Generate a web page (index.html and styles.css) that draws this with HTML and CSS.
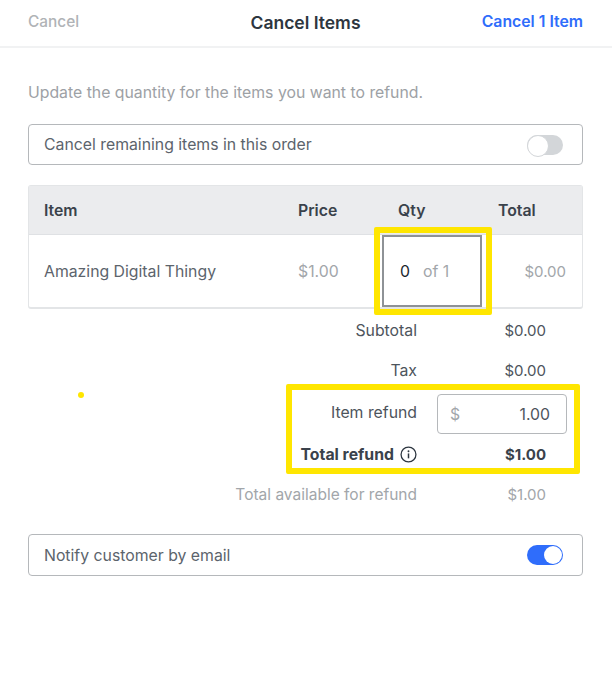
FILE: index.html
```html
<!DOCTYPE html>
<html lang="en">
<head>
    <meta charset="UTF-8">
    <meta name="viewport" content="width=device-width, initial-scale=1.0">
    <title>Cancel Items</title>
    <link rel="stylesheet" href="styles.css">
</head>
<body>

    <header class="topbar">
        <span class="topbar-cancel">Cancel</span>
        <h1 class="topbar-title">Cancel Items</h1>
        <span class="topbar-action">Cancel 1 Item</span>
    </header>

    <main class="content">
        <p class="intro">Update the quantity for the items you want to refund.</p>

        <div class="switch-row switch-cancel">
            <span>Cancel remaining items in this order</span>
            <span class="toggle"></span>
        </div>

        <!-- Items table -->
        <div class="items">
            <div class="items-head">
                <span>Item</span>
                <span>Price</span>
                <span class="cell-qty">Qty</span>
                <span class="cell-total">Total</span>
            </div>
            <div class="items-row">
                <span>Amazing Digital Thingy</span>
                <span class="muted">$1.00</span>
                <div class="qty-box">
                    <span class="qty-value">0</span>
                    <span class="muted">of 1</span>
                    <span class="highlight highlight-qty"></span>
                </div>
                <span class="muted cell-amount">$0.00</span>
            </div>
        </div>

        <!-- Totals -->
        <div class="summary">
            <div class="summary-row">
                <span class="summary-label">Subtotal</span>
                <span class="summary-value">$0.00</span>
            </div>
            <div class="summary-row">
                <span class="summary-label">Tax</span>
                <span class="summary-value">$0.00</span>
            </div>
            <div class="refund-group">
                <div class="summary-row">
                    <span class="summary-label summary-label-raised">Item refund</span>
                    <div class="money-input">
                        <span class="muted">$</span>
                        <span>1.00</span>
                    </div>
                </div>
                <div class="summary-row summary-strong">
                    <span class="summary-label">
                        Total refund
                        <svg class="info-icon" width="17" height="17" viewBox="0 0 16 16">
                            <circle cx="8" cy="8" r="7" fill="none" stroke="#2d3640" stroke-width="1.2"/>
                            <rect x="7.3" y="7" width="1.4" height="4.6" fill="#2d3640"/>
                            <circle cx="8" cy="4.9" r="0.9" fill="#2d3640"/>
                        </svg>
                    </span>
                    <span class="summary-value">$1.00</span>
                </div>
                <span class="highlight highlight-refund"></span>
            </div>
            <div class="summary-row summary-available muted">
                <span class="summary-label">Total available for refund</span>
                <span class="summary-value">$1.00</span>
            </div>
        </div>

        <div class="switch-row switch-notify">
            <span>Notify customer by email</span>
            <span class="toggle toggle-on"></span>
        </div>

        <span class="stray-dot"></span>
    </main>

</body>
</html>
```

FILE: styles.css
```css
* {
    box-sizing: border-box;
}
body {
    font-family: 'Inter', sans-serif;
    font-size: 15.8px;
    background-color: #fff;
    color: #5c646c;
    margin: 0;
}
.muted {
    color: #a2a6aa;
}
.topbar {
    display: grid;
    grid-template-columns: 1fr auto 1fr;
    align-items: center;
    height: 48px;
    padding: 0 29px 4px 28px;
    border-bottom: 2px solid #f1f2f3;
}
.topbar-cancel {
    color: #b0b3b6;
    font-size: 15.4px;
    font-weight: 500;
}
.topbar-title {
    margin: 2px 0 0;
    font-size: 17.5px;
    font-weight: 600;
    color: #2d3640;
}
.topbar-action {
    color: #2f6dfb;
    font-weight: 600;
    text-align: right;
}
.content {
    position: relative;
    padding: 0 29px 0 28px;
}
.intro {
    margin: 0;
    padding-top: 35px;
    line-height: 20px;
    color: #9da1a5;
}
.switch-row {
    display: flex;
    justify-content: space-between;
    align-items: center;
    height: 42px;
    padding: 0 19px 0 15px;
    border: 1px solid #b5b8bb;
    border-radius: 4px;
}
.switch-cancel {
    height: 41px;
    margin-top: 21px;
}
.switch-notify {
    margin-top: 20px;
}
.toggle {
    position: relative;
    width: 36px;
    height: 20px;
    border-radius: 10px;
    background-color: #d3d6d9;
}
.toggle::after {
    content: "";
    position: absolute;
    left: 0;
    top: 0;
    width: 20px;
    height: 20px;
    border-radius: 50%;
    background-color: #fff;
    border: 1px solid #d3d6d9;
}
.toggle-on {
    background-color: #2f6dfb;
}
.toggle-on::after {
    left: 17px;
    top: 1px;
    width: 18px;
    height: 18px;
    border: none;
}
.items {
    margin-top: 20px;
    border: 1px solid #e3e5e7;
    border-bottom-width: 2px;
    border-radius: 3px;
}
.items-head,
.items-row {
    display: grid;
    grid-template-columns: 254px 84px 100px 1fr;
    align-items: center;
    padding-left: 15px;
}
.items-head {
    height: 49px;
    background-color: #ebecee;
    border-bottom: 1px solid #dfe1e4;
    font-weight: 600;
    color: #3a424b;
}
.items-row {
    height: 72px;
}
.cell-qty,
.cell-total {
    padding-left: 16px;
}
.cell-amount {
    font-size: 15px;
    text-align: right;
    padding-right: 16px;
}
.qty-box {
    position: relative;
    display: flex;
    align-items: center;
    gap: 13px;
    height: 72px;
    width: 100px;
    padding-left: 16px;
    border: 2px solid #8e9296;
}
.qty-value {
    color: #20272e;
}
.highlight {
    position: absolute;
    border: 6px solid #ffe600;
    border-radius: 2px;
}
.highlight-qty {
    left: -10px;
    right: -12px;
    top: -10px;
    bottom: -10px;
}
.summary {
    margin-top: 1px;
    color: #4d545c;
}
.summary-row {
    display: grid;
    grid-template-columns: 389px 130px;
    align-items: center;
    column-gap: 20px;
    height: 40px;
}
.summary-label {
    display: flex;
    justify-content: flex-end;
    align-items: center;
    gap: 6px;
}
.summary-label-raised {
    padding-bottom: 4px;
}
.summary-value {
    font-size: 15px;
    text-align: right;
    padding-right: 21px;
}
.summary-available .summary-label {
    font-size: 15.5px;
}
.refund-group {
    position: relative;
    margin-top: 4px;
}
.highlight-refund {
    left: 258px;
    width: 294px;
    top: -10px;
    bottom: 0;
}
.summary-strong {
    font-weight: 700;
    color: #3a424b;
}
.money-input {
    display: flex;
    justify-content: space-between;
    align-items: center;
    height: 40px;
    padding: 0 16px 0 12px;
    border: 1px solid #b5b8bb;
    border-radius: 4px;
}
.stray-dot {
    position: absolute;
    left: 78px;
    top: 344px;
    width: 6px;
    height: 6px;
    border-radius: 50%;
    background-color: #ffe600;
}
```
